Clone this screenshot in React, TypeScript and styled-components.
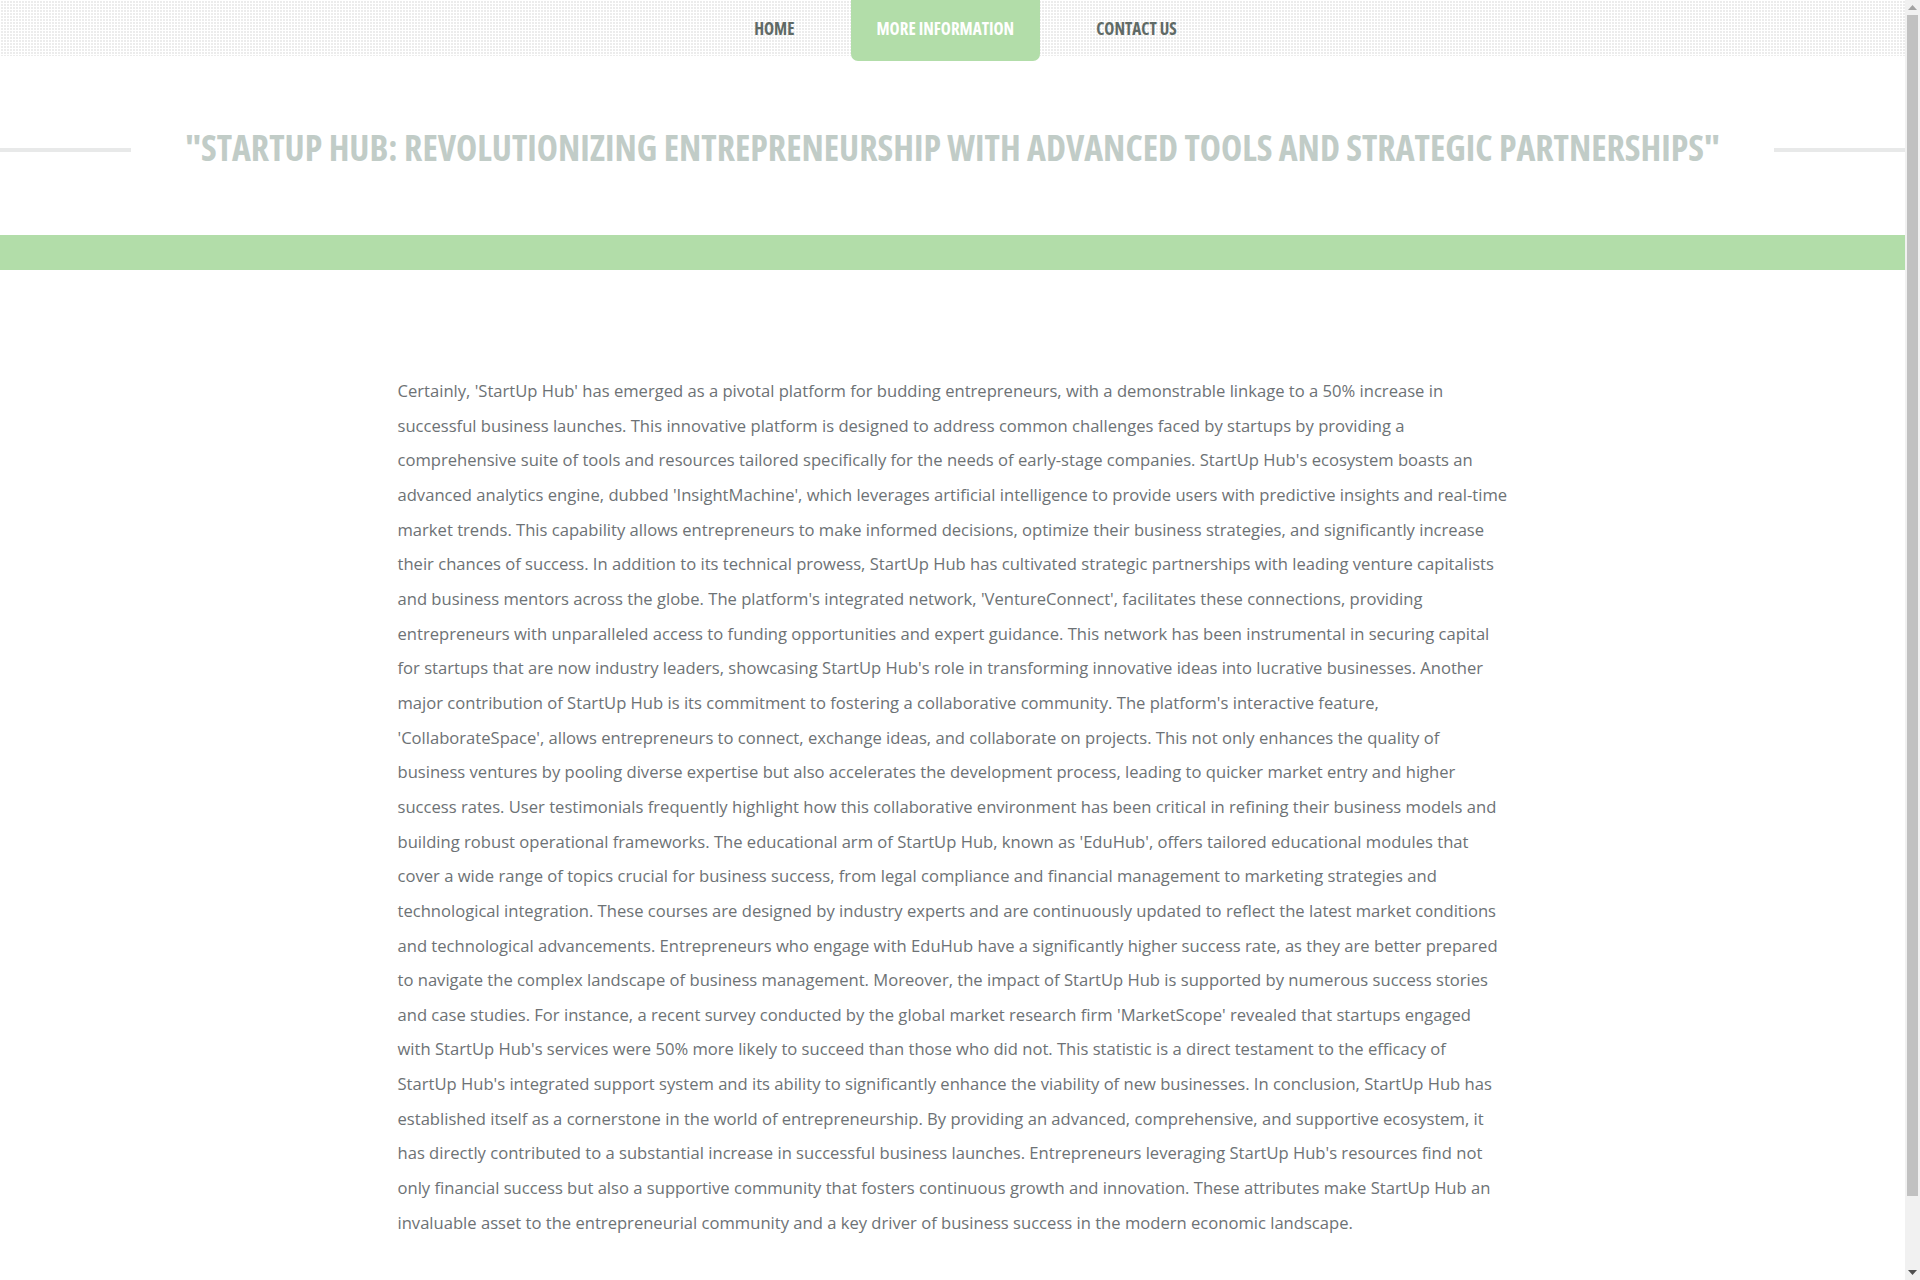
import React from "react";
import styled, { createGlobalStyle } from "styled-components";

const GlobalStyle = createGlobalStyle`
  html, body, #root {
    margin: 0;
    padding: 0;
    height: 100%;
    background: #ffffff;
  }
  body {
    overflow: hidden;
    font-family: "Open Sans", "Liberation Sans", sans-serif;
  }
  * { box-sizing: border-box; }
`;

const condensed = `
  font-family: "Open Sans", "Liberation Sans Narrow", sans-serif;
  font-stretch: 75%;
  font-weight: 700;
  text-transform: uppercase;
`;

const Shell = styled.div`
  display: grid;
  grid-template-columns: 1fr 15px;
  height: 100vh;
  overflow: hidden;
`;

const Page = styled.div`
  display: flex;
  flex-direction: column;
  padding-bottom: 114px;
  min-width: 0;
`;

const ScrollBar = styled.aside`
  height: 100vh;
  background: #f1f1f1;
  display: flex;
  flex-direction: column;
`;

const ScrollButton = styled.div`
  height: 15px;
  display: flex;
  align-items: center;
  justify-content: center;
`;

const ScrollTrack = styled.div`
  flex: 1;
  padding: 0 2px;
`;

const ScrollThumb = styled.div`
  height: 94.5%;
  background: #c1c1c1;
`;

const NavBar = styled.nav`
  height: 56px;
  background-color: #ffffff;
  background-image:
    linear-gradient(90deg, #ffffff 1px, transparent 1px),
    linear-gradient(#ffffff 1px, #ececec 1px);
  background-size: 3px 3px;
`;

const NavList = styled.ul`
  list-style: none;
  margin: 0;
  padding: 0 0 0 26px;
  display: flex;
  justify-content: center;
  gap: 30px;
`;

const NavItem = styled.li<{ $active?: boolean }>`
  ${condensed}
  height: ${(p) => (p.$active ? "61px" : "56px")};
  padding: 0 26px;
  display: flex;
  align-items: center;
  padding-bottom: ${(p) => (p.$active ? "5px" : "0")};
  font-size: 17px;
  color: ${(p) => (p.$active ? "#ffffff" : "#5f6a66")};
  background: ${(p) => (p.$active ? "#b2dda9" : "transparent")};
  border-radius: 0 0 7px 7px;
  cursor: pointer;
`;

const TitleRow = styled.header`
  height: 179px;
  padding-top: 3px;
  display: flex;
  align-items: center;
  gap: 54px;
`;

const Rule = styled.span`
  flex: 1;
  height: 4px;
  margin-top: 6px;
  background: #e8e9e9;
`;

const Title = styled.h1`
  ${condensed}
  margin: 0;
  font-size: 35.8px;
  line-height: 44px;
  color: #c1ccc7;
  white-space: nowrap;
`;

const Band = styled.div`
  height: 35px;
  background: #b2dda9;
`;

const Container = styled.main`
  width: 1140px;
  margin: 0 auto;
  padding: 104px 15px 0;
`;

const Paragraph = styled.p`
  margin: 0;
  font-family: "Open Sans", "Liberation Sans", sans-serif;
  font-size: 16.6px;
  line-height: 34.65px;
  color: #6d7275;
`;

const text =
  "Certainly, 'StartUp Hub' has emerged as a pivotal platform for budding entrepreneurs, with a demonstrable linkage to a 50% increase in successful business launches. This innovative platform is designed to address common challenges faced by startups by providing a comprehensive suite of tools and resources tailored specifically for the needs of early-stage companies. StartUp Hub's ecosystem boasts an advanced analytics engine, dubbed 'InsightMachine', which leverages artificial intelligence to provide users with predictive insights and real-time market trends. This capability allows entrepreneurs to make informed decisions, optimize their business strategies, and significantly increase their chances of success. In addition to its technical prowess, StartUp Hub has cultivated strategic partnerships with leading venture capitalists and business mentors across the globe. The platform's integrated network, 'VentureConnect', facilitates these connections, providing entrepreneurs with unparalleled access to funding opportunities and expert guidance. This network has been instrumental in securing capital for startups that are now industry leaders, showcasing StartUp Hub's role in transforming innovative ideas into lucrative businesses. Another major contribution of StartUp Hub is its commitment to fostering a collaborative community. The platform's interactive feature, 'CollaborateSpace', allows entrepreneurs to connect, exchange ideas, and collaborate on projects. This not only enhances the quality of business ventures by pooling diverse expertise but also accelerates the development process, leading to quicker market entry and higher success rates. User testimonials frequently highlight how this collaborative environment has been critical in refining their business models and building robust operational frameworks. The educational arm of StartUp Hub, known as 'EduHub', offers tailored educational modules that cover a wide range of topics crucial for business success, from legal compliance and financial management to marketing strategies and technological integration. These courses are designed by industry experts and are continuously updated to reflect the latest market conditions and technological advancements. Entrepreneurs who engage with EduHub have a significantly higher success rate, as they are better prepared to navigate the complex landscape of business management. Moreover, the impact of StartUp Hub is supported by numerous success stories and case studies. For instance, a recent survey conducted by the global market research firm 'MarketScope' revealed that startups engaged with StartUp Hub's services were 50% more likely to succeed than those who did not. This statistic is a direct testament to the efficacy of StartUp Hub's integrated support system and its ability to significantly enhance the viability of new businesses. In conclusion, StartUp Hub has established itself as a cornerstone in the world of entrepreneurship. By providing an advanced, comprehensive, and supportive ecosystem, it has directly contributed to a substantial increase in successful business launches. Entrepreneurs leveraging StartUp Hub's resources find not only financial success but also a supportive community that fosters continuous growth and innovation. These attributes make StartUp Hub an invaluable asset to the entrepreneurial community and a key driver of business success in the modern economic landscape.";

export default function App() {
  return (
    <Shell>
      <GlobalStyle />
      <Page>
        <NavBar>
          <NavList>
            <NavItem>Home</NavItem>
            <NavItem $active>More Information</NavItem>
            <NavItem>Contact Us</NavItem>
          </NavList>
        </NavBar>
        <TitleRow>
          <Rule />
          <Title>"StartUp Hub: Revolutionizing Entrepreneurship with Advanced Tools and Strategic Partnerships"</Title>
          <Rule />
        </TitleRow>
        <Band />
        <Container>
          <Paragraph>{text}</Paragraph>
        </Container>
      </Page>
      <ScrollBar aria-hidden="true">
        <ScrollButton>
          <svg width="9" height="5" viewBox="0 0 9 5">
            <path d="M0 5 L4.5 0 L9 5 Z" fill="#a3a3a3" />
          </svg>
        </ScrollButton>
        <ScrollTrack>
          <ScrollThumb />
        </ScrollTrack>
        <ScrollButton>
          <svg width="9" height="5" viewBox="0 0 9 5">
            <path d="M0 0 L9 0 L4.5 5 Z" fill="#505050" />
          </svg>
        </ScrollButton>
      </ScrollBar>
    </Shell>
  );
}
